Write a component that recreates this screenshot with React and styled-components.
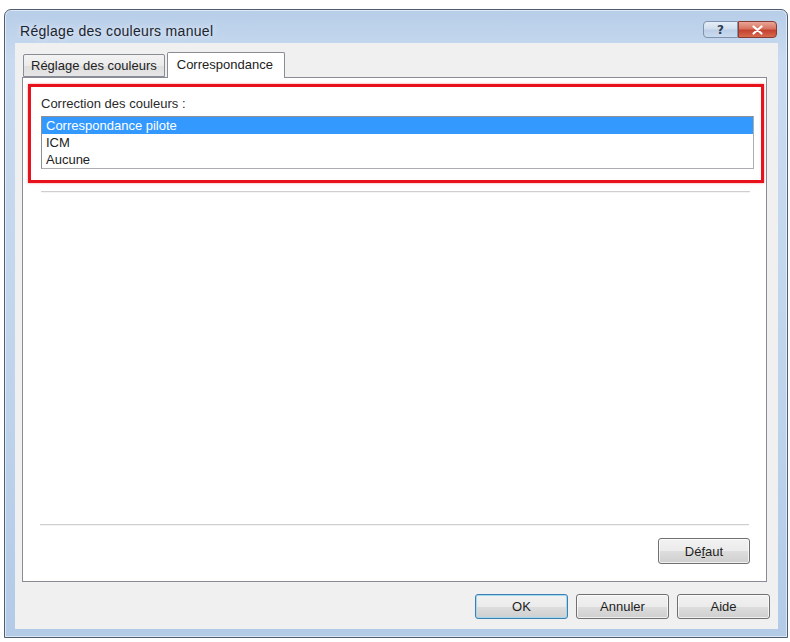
import styled, { createGlobalStyle } from "styled-components";

const GlobalStyle = createGlobalStyle`
  html, body {
    margin: 0;
    padding: 0;
    background: #ffffff;
  }

  body {
    font-family: "Liberation Sans", Arial, sans-serif;
    font-size: 13px;
    color: #222;
  }
`;

const items = ["Correspondance pilote", "ICM", "Aucune"];

export default function App() {
  return (
    <>
      <GlobalStyle />
      <Page>
        <Window>
          <TitleBar>
            <Title>Réglage des couleurs manuel</Title>
            <CaptionButtons>
              <CaptionButton $kind="help">?</CaptionButton>
              <CaptionButton $kind="close">
                <svg width="11" height="10" viewBox="0 0 11 10">
                  <path
                    d="M1.5 1.5 L9.5 8.5 M9.5 1.5 L1.5 8.5"
                    stroke="#fff"
                    strokeWidth="2.2"
                    strokeLinecap="round"
                  />
                </svg>
              </CaptionButton>
            </CaptionButtons>
          </TitleBar>

          <Client>
            <Tabs>
              <Tab>Réglage des couleurs</Tab>
              <Tab $active>Correspondance</Tab>
            </Tabs>

            <Panel>
              <Highlight>
                <GroupLabel>Correction des couleurs :</GroupLabel>
                <ListBox>
                  {items.map((item, i) => (
                    <ListItem key={item} $selected={i === 0}>
                      {item}
                    </ListItem>
                  ))}
                </ListBox>
              </Highlight>
              <Separator $left={18} $right={16} />
              <Spacer />
              <Separator $left={17} $right={17} />
              <PanelFooter>
                <Button $width={92} $height={26}>
                  Dé<u>f</u>aut
                </Button>
              </PanelFooter>
            </Panel>

            <DialogButtons>
              <Button $default>OK</Button>
              <Button>Annuler</Button>
              <Button>Aide</Button>
            </DialogButtons>
          </Client>
        </Window>
      </Page>
    </>
  );
}

const Page = styled.div`
  padding: 9px 0 0 4px;
`;

const Window = styled.div`
  box-sizing: border-box;
  display: flex;
  flex-direction: column;
  width: 784px;
  height: 629px;
  padding: 0 9px 8px 10px;
  border: 1px solid #4f5e70;
  border-radius: 7px 7px 0 0;
  background: linear-gradient(180deg, #b7cde8 0%, #c9dbf0 8%, #bfd4ec 60%, #b3cbe7 100%);
  box-shadow: inset 0 0 0 1px rgba(255, 255, 255, 0.55);
`;

const TitleBar = styled.div`
  display: flex;
  align-items: center;
  justify-content: space-between;
  height: 33px;
  padding: 6px 1px 0 5px;
  box-sizing: border-box;
`;

const Title = styled.div`
  font-size: 14px;
  letter-spacing: 0.3px;
  color: #1c2430;
  text-shadow: 0 0 6px rgba(255, 255, 255, 0.9);
  padding-top: 2px;
`;

const CaptionButtons = styled.div`
  display: flex;
`;

const CaptionButton = styled.div`
  display: flex;
  align-items: center;
  justify-content: center;
  height: 17px;
  width: ${(p) => (p.$kind === "close" ? "39px" : "35px")};
  box-sizing: border-box;
  border: 1px solid ${(p) => (p.$kind === "close" ? "#8a3b31" : "#7f93ad")};
  border-radius: ${(p) => (p.$kind === "close" ? "0 4px 4px 0" : "4px 0 0 4px")};
  background: ${(p) =>
    p.$kind === "close"
      ? "linear-gradient(180deg, #e9a699 0%, #d8735f 45%, #c4412f 55%, #d66a4f 100%)"
      : "linear-gradient(180deg, #e6eef8 0%, #d1deee 45%, #bccfe6 55%, #c9dbef 100%)"};
  color: #2e3d52;
  font-family: "DejaVu Sans", sans-serif;
  font-size: 12px;
  font-weight: bold;
  line-height: 1;
`;

const Client = styled.div`
  flex: 1;
  display: flex;
  flex-direction: column;
  min-height: 0;
  padding: 9px 8px 10px 7px;
  background: #f0f0f0;
`;

const Tabs = styled.div`
  display: flex;
  align-items: flex-end;
  gap: 2px;
  height: 25px;
  padding-left: 1px;
  position: relative;
  z-index: 1;
`;

const Tab = styled.div`
  box-sizing: border-box;
  display: flex;
  align-items: center;
  height: ${(p) => (p.$active ? "26px" : "23px")};
  margin-bottom: ${(p) => (p.$active ? "-1px" : "0")};
  padding: ${(p) => (p.$active ? "0 11px 3px 9px" : "0 7px 0 7px")};
  border: 1px solid #898c95;
  border-bottom: ${(p) => (p.$active ? "none" : "1px solid #898c95")};
  border-radius: 2px 2px 0 0;
  background: ${(p) =>
    p.$active ? "#ffffff" : "linear-gradient(180deg, #f3f3f3 0%, #ebebeb 50%, #dedede 51%, #e6e6e6 100%)"};
  color: #222;
  white-space: nowrap;
`;

const Panel = styled.div`
  flex: 1;
  display: flex;
  flex-direction: column;
  margin-right: 3px;
  border: 1px solid #898c95;
  background: #ffffff;
`;

const Highlight = styled.div`
  box-sizing: border-box;
  height: 99px;
  margin: 6px 2px 0 5px;
  padding: 9px 7px 0 10px;
  border: 3px solid #e8121c;
  box-shadow: 0 0 2px rgba(232, 18, 28, 0.5);
`;

const GroupLabel = styled.div`
  height: 15px;
  line-height: 15px;
  color: #2a2a2a;
`;

const ListBox = styled.div`
  margin-top: 5px;
  border: 1px solid #abadb3;
  border-top-color: #8e9095;
  border-left-color: #8e9095;
  background: #fff;
`;

const ListItem = styled.div`
  height: 17px;
  line-height: 17px;
  padding-left: 4px;
  background: ${(p) => (p.$selected ? "#3399ff" : "transparent")};
  color: ${(p) => (p.$selected ? "#ffffff" : "#222")};
`;

const Separator = styled.div`
  height: 1px;
  margin: 8px ${(p) => p.$right}px 0 ${(p) => p.$left}px;
  background: #cfcfcf;
  box-shadow: 0 1px 0 #f4f4f4;
`;

const Spacer = styled.div`
  flex: 1;
`;

const PanelFooter = styled.div`
  display: flex;
  justify-content: flex-end;
  padding: 13px 16px 17px 0;
`;

const DialogButtons = styled.div`
  display: flex;
  justify-content: flex-end;
  gap: 8px;
  margin-top: 12px;
`;

const Button = styled.div`
  box-sizing: border-box;
  display: flex;
  align-items: center;
  justify-content: center;
  width: ${(p) => p.$width || 93}px;
  height: ${(p) => p.$height || 25}px;
  border: 1px solid ${(p) => (p.$default ? "#3c7fb1" : "#707070")};
  border-radius: 3px;
  background: linear-gradient(180deg, #f2f2f2 0%, #ebebeb 50%, #dddddd 51%, #cfcfcf 100%);
  box-shadow: inset 0 0 0 1px ${(p) => (p.$default ? "#a3d8f0" : "rgba(255, 255, 255, 0.7)")};
  color: #1e1e1e;

  & u {
    text-decoration-thickness: 1px;
  }
`;
